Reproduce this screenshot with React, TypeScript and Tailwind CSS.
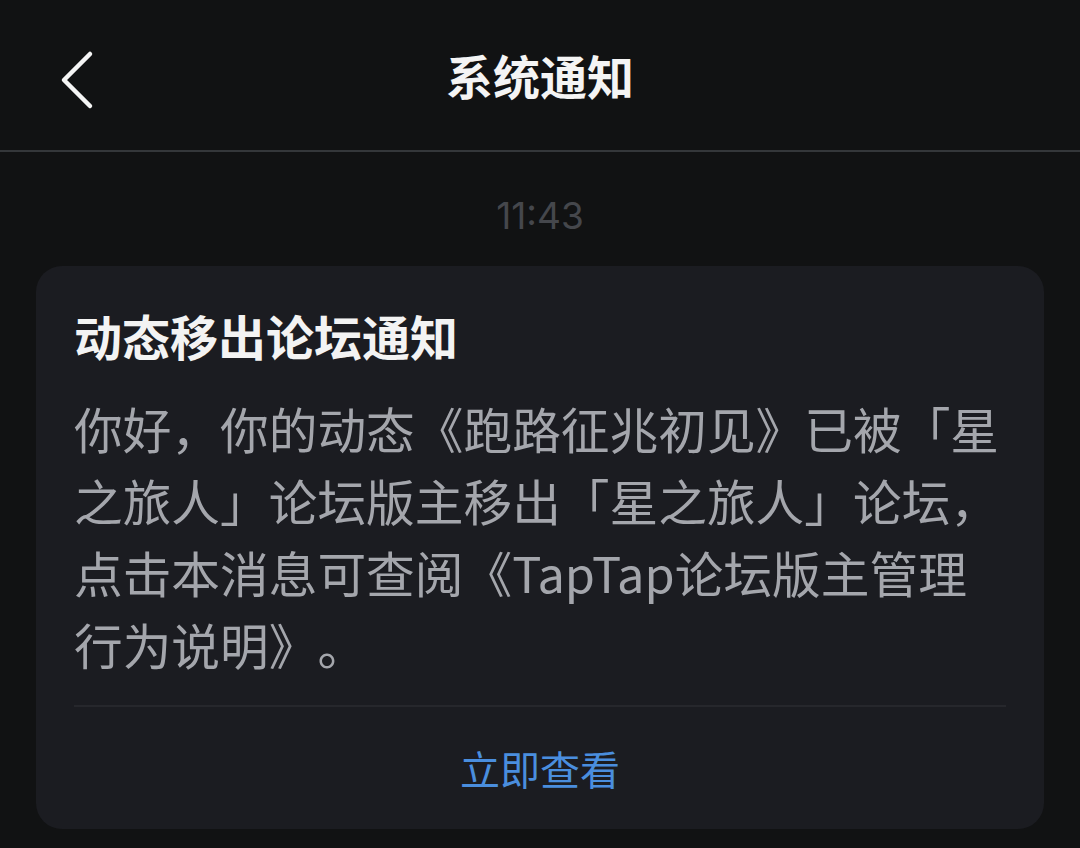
import React from "react";

export default function App() {
  const cjk = { fontFamily: '"Noto Sans CJK SC", "Noto Sans", sans-serif' };
  return (
    <div className="w-[1080px] h-[848px] bg-[#111213] overflow-hidden [text-spacing-trim:space-all]" style={cjk}>
      <div className="relative h-[152px] flex items-center justify-center border-b-2 border-[#34373a]">
        <svg className="absolute left-[56px] top-[48px]" width="44" height="64" viewBox="0 0 44 64" fill="none">
          <path d="M34 6 L8 32 L34 58" stroke="#f5f5f5" strokeWidth="4.5" strokeLinecap="round" strokeLinejoin="round" />
        </svg>
        <div className="text-[47px] leading-[48px] font-bold text-[#f4f4f4]">系统通知</div>
      </div>
      <div className="pt-[45px] flex justify-center">
        <div className="text-[37px] leading-[38px] text-[#45474c]" style={{ fontFamily: 'Inter, Roboto, sans-serif' }}>11:43</div>
      </div>
      <div className="mx-[36px] mt-[31px] rounded-[26px] bg-[#1b1c21]">
        <div className="px-[38px] pt-[45px]">
          <div className="text-[48px] leading-[48px] font-bold text-[#f3f3f3]">动态移出论坛通知</div>
          <div className="mt-[33px] text-[48.7px] leading-[72px] text-[#a4a6ac] whitespace-nowrap">
            你好，你的动态《跑路征兆初见》已被「星
            <br />
            之旅人」论坛版主移出「星之旅人」论坛，
            <br />
            点击本消息可查阅《TapTap论坛版主管理
            <br />
            行为说明》。
          </div>
          <div className="mt-[25px] h-[2px] bg-[#26272c]" />
        </div>
        <div className="h-[122px] flex items-center justify-center">
          <div className="text-[40px] leading-[40px] text-[#4a8ede]">立即查看</div>
        </div>
      </div>
    </div>
  );
}
